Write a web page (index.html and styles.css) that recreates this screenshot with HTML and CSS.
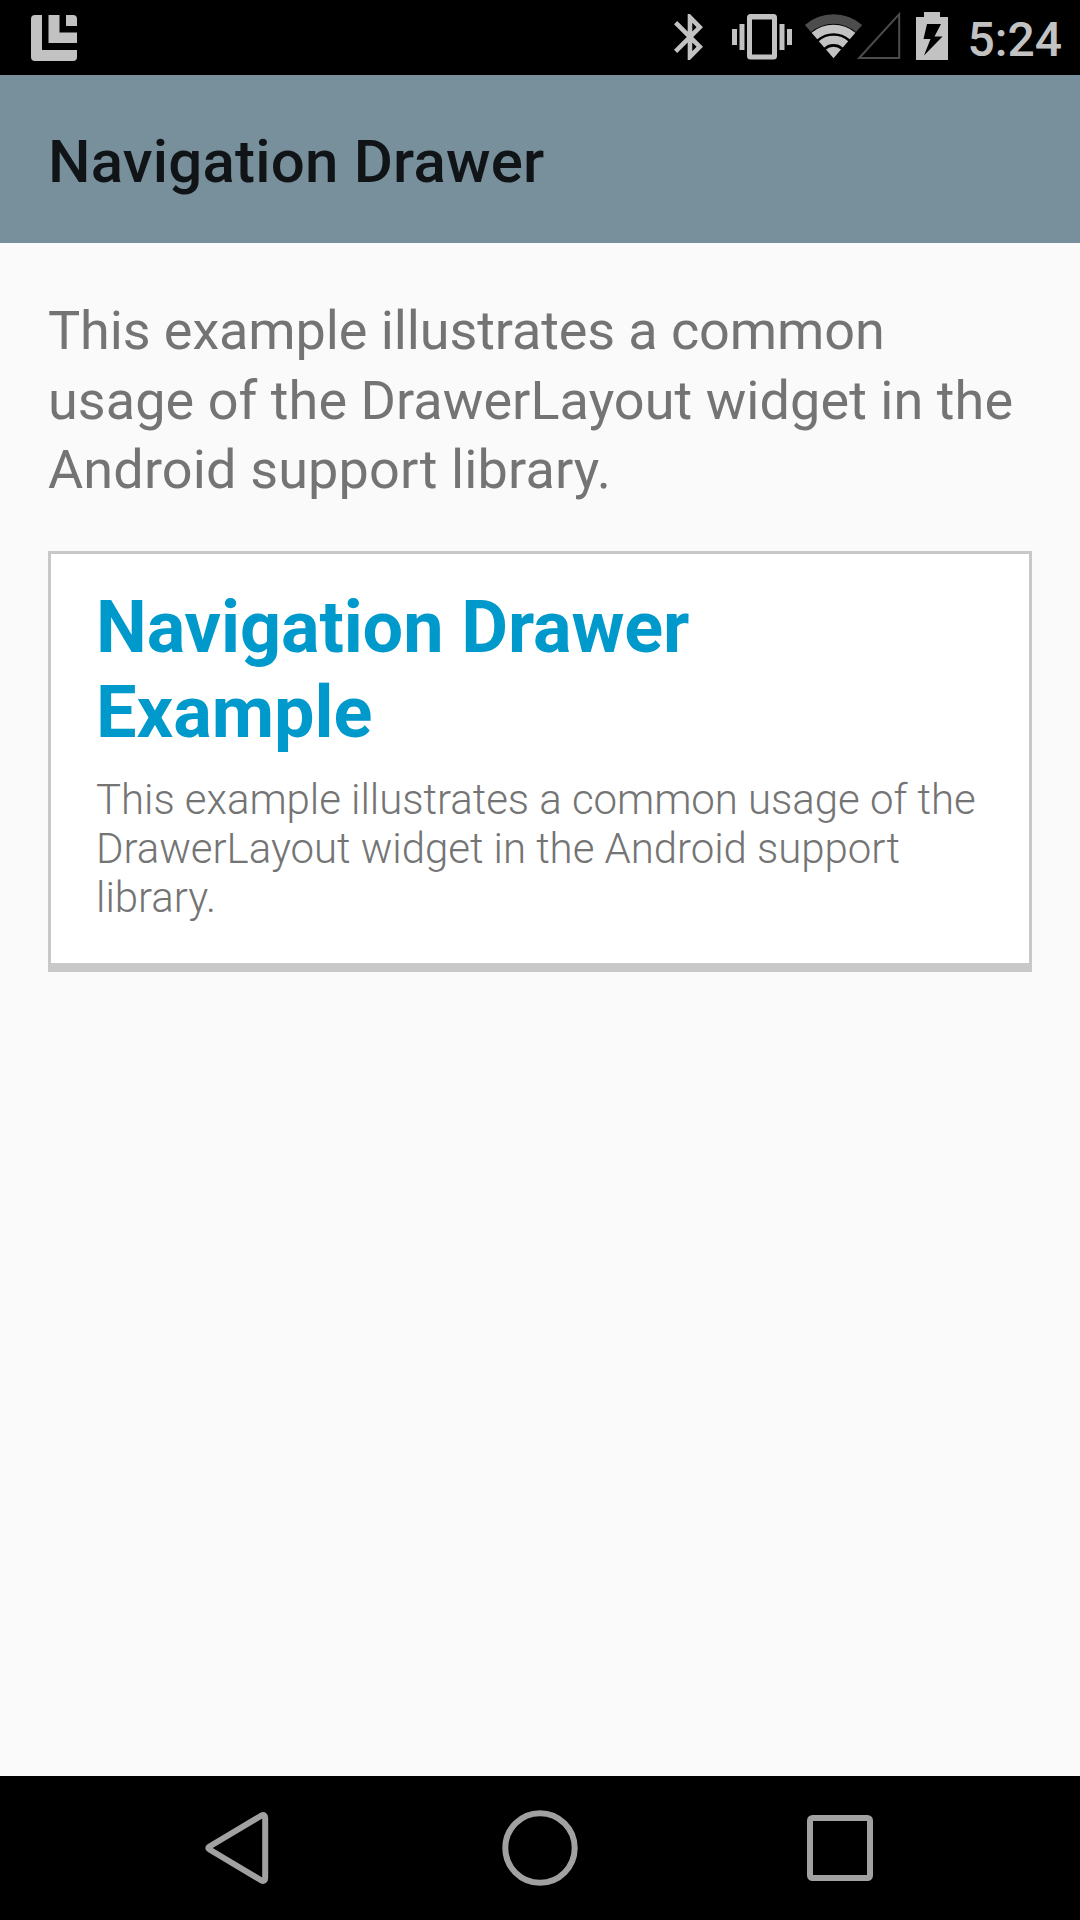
FILE: index.html
```html
<!DOCTYPE html>
<html lang="en">
<head>
<meta charset="utf-8">
<title>Navigation Drawer</title>
<link rel="stylesheet" href="styles.css">
</head>
<body>
<header class="status">
  <svg class="icon notification" width="46" height="46" viewBox="0 0 46 46">
    <path d="M4 0h7v35h35v7q0 4-4 4H4q-4 0-4-4V4q0-4 4-4zM17.500 0h11v17.500H46v10.500H17.500zM35 0h7q4 0 4 4v7H35z"/>
  </svg>
  <svg class="icon bluetooth" width="29" height="46" viewBox="5 2 12.710 20" preserveAspectRatio="none">
    <path d="M17.710 7.710L12 2h-1v7.590L6.410 5 5 6.410 10.590 12 5 17.590 6.410 19 11 14.410V22h1l5.710-5.710-4.300-4.290 4.300-4.290zM13 5.830l1.880 1.880L13 9.590V5.830zm1.880 10.460L13 18.170v-3.760l1.880 1.880z"/>
  </svg>
  <svg class="icon vibrate" width="60" height="46" viewBox="0 0 60 46">
    <path d="M0 15h5v16H0zM7.500 10h5v26h-5zM47.500 10h5v26h-5zM55 15h5v16h-5z"/>
    <path fill-rule="evenodd" d="M18.500 0h23q3.500 0 3.500 3.500v38.500q0 3.500-3.500 3.500h-23q-3.500 0-3.500-3.500V3.500Q15 0 18.500 0zM20 5.500v35h20v-35z"/>
  </svg>
  <svg class="icon wifi" width="59" height="45" viewBox="0 0 59 45">
    <g transform="translate(29.500 44.300)">
      <path class="dim" d="M-28.700-33.400A44 44 0 0 1 28.700-33.400L22.500-26.200A34.500 34.500 0 0 0-22.500-26.200z"/>
      <path d="M-21.900-25.500A33.600 33.600 0 0 1 21.900-25.500L16.300-19A25 25 0 0 0-16.300-19z"/>
      <path d="M-14.700-17.100A22.500 22.500 0 0 1 14.700-17.100L9.300-10.800A14.300 14.300 0 0 0-9.300-10.800z"/>
      <path d="M-7.500-8.700A11.500 11.500 0 0 1 7.500-8.700L0 0z"/>
    </g>
  </svg>
  <svg class="icon signal" width="44" height="48" viewBox="0 0 44 48">
    <path d="M2.200 46L42.200 2.200V46z"/>
  </svg>
  <svg class="icon battery" width="32" height="48" viewBox="0 0 32 48">
    <path fill-rule="evenodd" d="M8 0h16v5h8v43H0V5h8zM11 12L7.500 27h7L8 43.500 26.500 24.500h-8L25 12z"/>
  </svg>
  <span class="clock">5:24</span>
</header>
<div class="appbar"><h1 class="appbar-title">Navigation Drawer</h1></div>
<main class="content">
  <p class="intro"><span class="tight">This example illustrates a common</span><br><span class="loose">usage of the DrawerLayout widget in the</span><br><span class="looser">Android support library.</span></p>
  <section class="card">
    <h2 class="card-title"><span class="tight">Navigation Drawer</span><br>Example</h2>
    <p class="card-text">This example illustrates a common usage of the<br>DrawerLayout widget in the Android support<br>library.</p>
  </section>
</main>
<nav class="navbar">
  <svg class="nav-icon" width="76" height="76" viewBox="0 0 76 76"><path d="M7.500 36.500L59.500 5.500Q63.200 4 63.200 8V68Q63.200 72 59.500 70.500L7.500 39.500Q5 38 7.500 36.500z"/></svg>
  <svg class="nav-icon" width="76" height="76" viewBox="0 0 76 76"><circle cx="38" cy="38" r="34.700"/></svg>
  <svg class="nav-icon" width="76" height="76" viewBox="0 0 76 76"><rect x="8" y="8" width="60" height="60" rx="2.500"/></svg>
</nav>
</body>
</html>
```

FILE: styles.css
```css
* { box-sizing: border-box; margin: 0; padding: 0; }
body { width: 1080px; height: 1920px; display: flex; flex-direction: column; background: #fafafa; font-family: Roboto, sans-serif; }
.status { height: 75px; background: #000; display: flex; align-items: flex-start; padding: 0 18px 0 31px; }
.icon { display: block; flex: none; fill: #c2c2c2; }
.notification { margin-top: 15px; margin-right: auto; }
.bluetooth { margin-top: 14px; margin-right: 29px; }
.vibrate { margin-top: 14px; margin-right: 12px; }
.wifi { margin-top: 14px; margin-right: -6px; }
.wifi .dim { fill: #4c4c4c; }
.signal { margin-top: 12px; margin-right: 15px; }
.signal path { fill: none; stroke: #4c4c4c; stroke-width: 2px; }
.battery { margin-top: 12px; margin-right: 19.500px; }
.clock { color: #c2c2c2; font-size: 48px; line-height: 79px; font-weight: 500; }
.appbar { height: 168px; background: #78909c; padding: 4px 48px 0; display: flex; align-items: center; }
.appbar-title { font-size: 60px; font-weight: 500; letter-spacing: 0.200px; color: #101416; }
.content { flex: 1; padding: 48px; }
.intro { font-size: 54px; line-height: 69.500px; color: #747474; padding-top: 5px; }
.tight { letter-spacing: -0.100px; }
.loose { letter-spacing: 0.060px; }
.looser { letter-spacing: 0.140px; }
.card { margin-top: 46px; height: 421px; background: #fff; border: 3px solid #c8c8c8; border-bottom-width: 9px; padding: 31px 45px; }
.card-title { font-size: 72px; line-height: 85px; font-weight: 700; color: #0099cc; }
.card-text { font-size: 42px; line-height: 49px; font-weight: 300; letter-spacing: -0.050px; color: #747474; margin-top: 20px; }
.navbar { height: 144px; background: #000; display: flex; align-items: center; justify-content: center; gap: 224px; }
.nav-icon { display: block; fill: none; stroke: #a1a1a1; stroke-width: 6px; stroke-linejoin: round; }
```
